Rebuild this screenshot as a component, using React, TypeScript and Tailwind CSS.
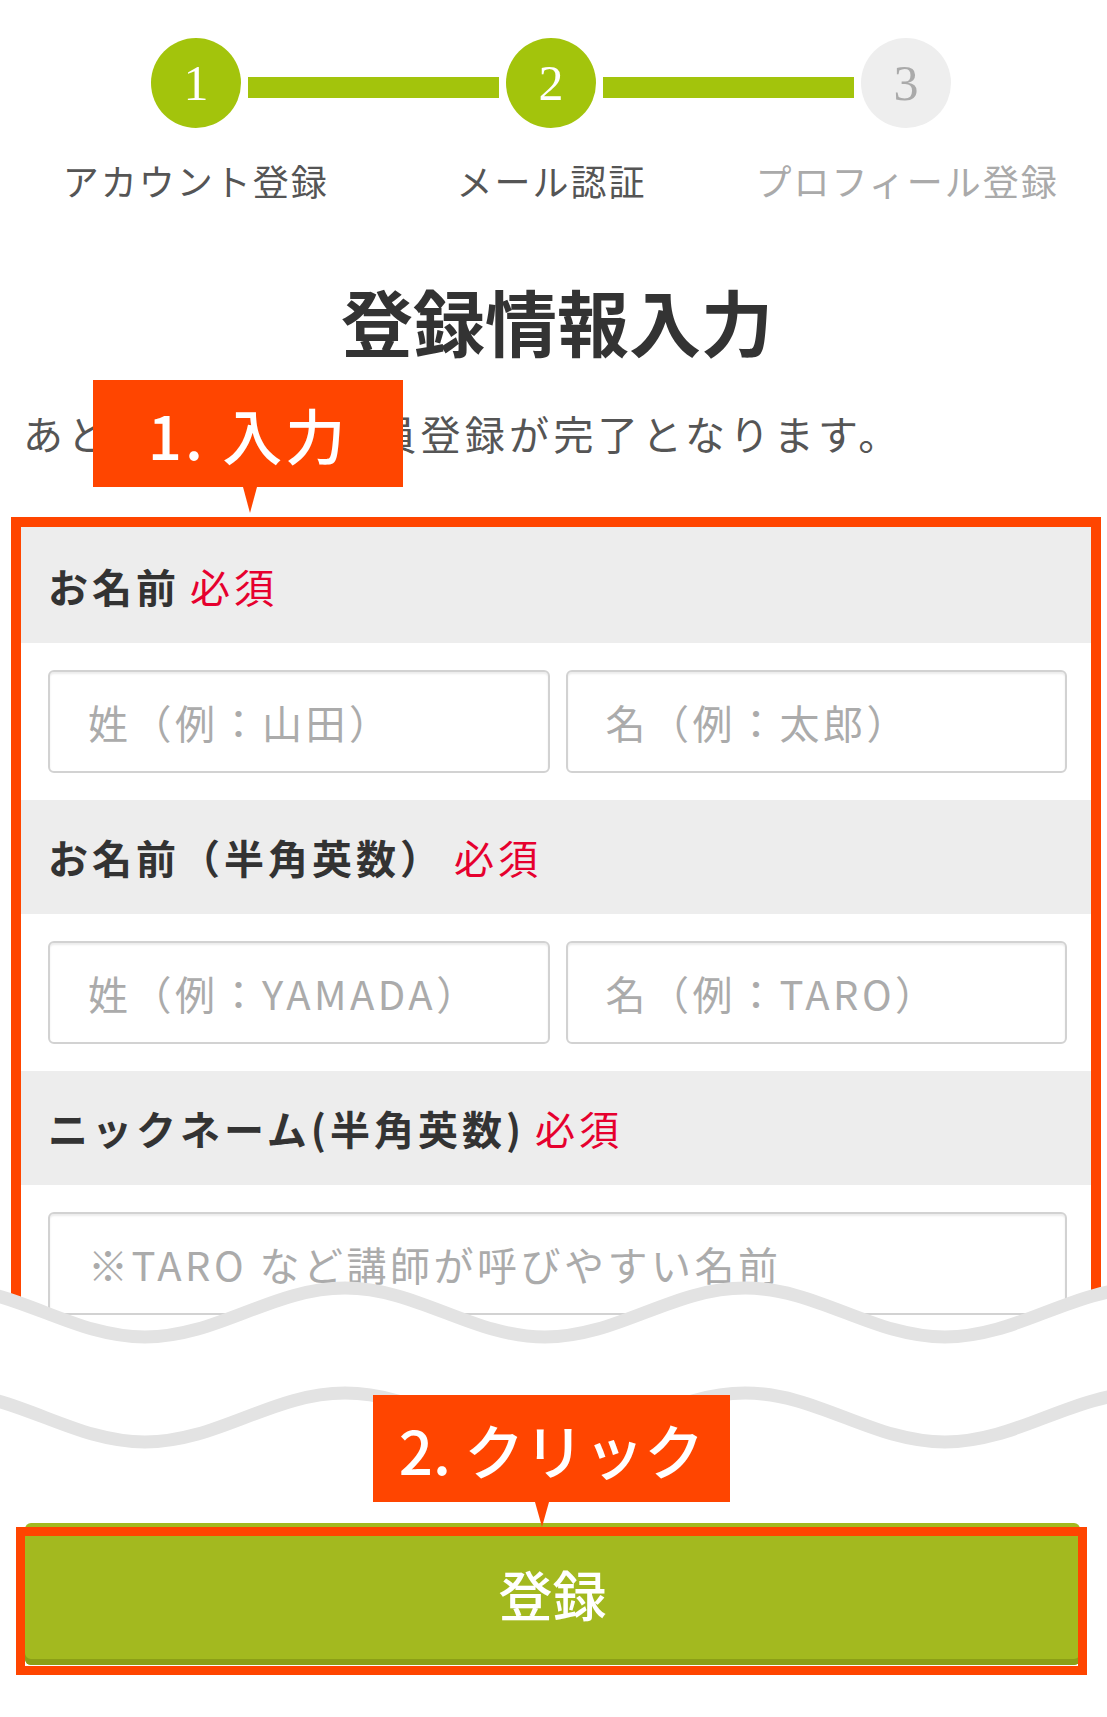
import React from "react";

const jp = "font-['Noto_Sans_CJK_JP','Noto_Sans',sans-serif]";

const steps = [
  { num: "1", label: "アカウント登録", done: true },
  { num: "2", label: "メール認証", done: true },
  { num: "3", label: "プロフィール登録", done: false },
];

// sine-like wave made of cubic segments, period 400, first trough at x=145
function wavePath(c: number, a: number) {
  const h = 200;
  const k = 72.8;
  let x = -255;
  let y = c + a;
  let d = `M ${x} ${y}`;
  for (let i = 0; i < 8; i++) {
    const ny = y === c + a ? c - a : c + a;
    d += ` C ${x + k} ${y}, ${x + h - k} ${ny}, ${x + h} ${ny}`;
    x += h;
    y = ny;
  }
  return d;
}

const Circle: React.FC<{ num: string; done: boolean }> = ({ num, done }) => (
  <div
    className={`w-[90px] h-[90px] shrink-0 rounded-full flex items-center justify-center font-['Liberation_Serif',serif] text-[50px] leading-none ${
      done ? "bg-[#a3c40c] text-white" : "bg-[#eeeeee] text-[#aaaaaa]"
    }`}
  >
    {num}
  </div>
);

const Line: React.FC = () => <div className="w-[251px] h-[21px] mx-[7px] mt-[9px] bg-[#a3c40c]" />;

const Band: React.FC<{ label: string }> = ({ label }) => (
  <div className="h-[114px] bg-[#ededed] flex items-center pl-[27px] text-[40px] leading-[40px] font-bold tracking-[4px] text-[#333]">
    {label}
    <span className="ml-[10px] text-[#e6002e] font-normal">必須</span>
  </div>
);

const Field: React.FC<{ placeholder: string }> = ({ placeholder }) => (
  <input
    placeholder={placeholder}
    className="w-full h-[103px] rounded-[6px] border-2 border-[#d2d2d2] bg-white pl-[38px] text-[40px] tracking-[3.5px] text-[#333] shadow-[inset_0_2px_2px_rgba(0,0,0,0.08)] placeholder:text-[#ababab] outline-none"
  />
);

export default function App() {
  return (
    <div className={`w-[1107px] min-h-[1717px] bg-white overflow-hidden ${jp}`}>
      {/* progress steps */}
      <div className="flex items-center pl-[151px] pt-[38px]">
        <Circle num={steps[0].num} done />
        <Line />
        <Circle num={steps[1].num} done />
        <Line />
        <Circle num={steps[2].num} done={false} />
      </div>
      <div className="grid grid-cols-3 pl-[18px] pr-[22px] mt-[34px] text-[36px] leading-[36px] tracking-[2px]">
        {steps.map((s) => (
          <div key={s.num} className={`text-center ${s.done ? "text-[#555]" : "text-[#aaa]"}`}>
            {s.label}
          </div>
        ))}
      </div>

      <h1 className="mt-[86px] pl-[7px] text-center text-[72px] leading-[72px] font-bold text-[#333]">
        登録情報入力
      </h1>

      <div className="relative mt-[57px] pl-[23px] text-[40px] leading-[40px] tracking-[4.3px] text-[#555]">
        あと少しで無料会員登録が完了となります。
        <div className="absolute top-[-33px] left-[93px] w-[310px] h-[107px] bg-[#ff4500] flex items-center justify-center text-white text-[60px] leading-none font-medium tracking-[3px]">
          1. 入力
        </div>
        <div className="absolute top-[74px] left-[243px] w-0 h-0 border-l-[7px] border-r-[7px] border-t-[26px] border-l-transparent border-r-transparent border-t-[#ff4500]" />
      </div>

      {/* form, cut off by the wave */}
      <div className="relative mt-[64px] h-[843px] overflow-hidden">
        <div className="ml-[11px] w-[1090px] border-[10px] border-[#ff4500]">
          <div className="h-[2px] bg-[#ededed]" />
          <Band label="お名前" />
          <div className="grid grid-cols-2 gap-[16px] pl-[27px] pr-[24px] py-[27px] bg-white">
            <Field placeholder="姓（例：山田）" />
            <Field placeholder="名（例：太郎）" />
          </div>
          <Band label="お名前（半角英数）" />
          <div className="grid grid-cols-2 gap-[16px] pl-[27px] pr-[24px] py-[27px] bg-white">
            <Field placeholder="姓（例：YAMADA）" />
            <Field placeholder="名（例：TARO）" />
          </div>
          <Band label="ニックネーム(半角英数)" />
          <div className="pl-[27px] pr-[24px] py-[27px] bg-white">
            <Field placeholder="※TARO など講師が呼びやすい名前" />
          </div>
        </div>
        <svg className="absolute left-0 bottom-0" width="1107" height="90" viewBox="0 0 1107 90">
          <path d={`${wavePath(42.5, 24.5)} L 1345 90 L -255 90 Z`} fill="#ffffff" />
          <path d={wavePath(42.5, 24.5)} fill="none" stroke="#e3e3e3" strokeWidth="13" />
        </svg>
      </div>

      {/* submit area */}
      <div className="relative">
        <svg className="block" width="1107" height="95" viewBox="0 0 1107 95">
          <path d={wavePath(57.5, 24.5)} fill="none" stroke="#e3e3e3" strokeWidth="13" />
        </svg>
        <button className="mt-[68px] ml-[25px] w-[1055px] h-[142px] rounded-[6px] bg-[#a3b91f] shadow-[inset_0_-6px_0_#8b9f17] text-white text-[54px] leading-none font-medium">
          登録
        </button>
        <div className="absolute top-[167px] left-[16px] w-[1071px] h-[148px] border-[9px] border-[#ff4500]" />
        <div className="absolute top-[35px] left-[373px] w-[357px] h-[107px] bg-[#ff4500] flex items-center justify-center text-white text-[60px] leading-none font-medium">
          2. クリック
        </div>
        <div className="absolute top-[142px] left-[535px] w-0 h-0 border-l-[7px] border-r-[7px] border-t-[25px] border-l-transparent border-r-transparent border-t-[#ff4500]" />
      </div>
    </div>
  );
}
